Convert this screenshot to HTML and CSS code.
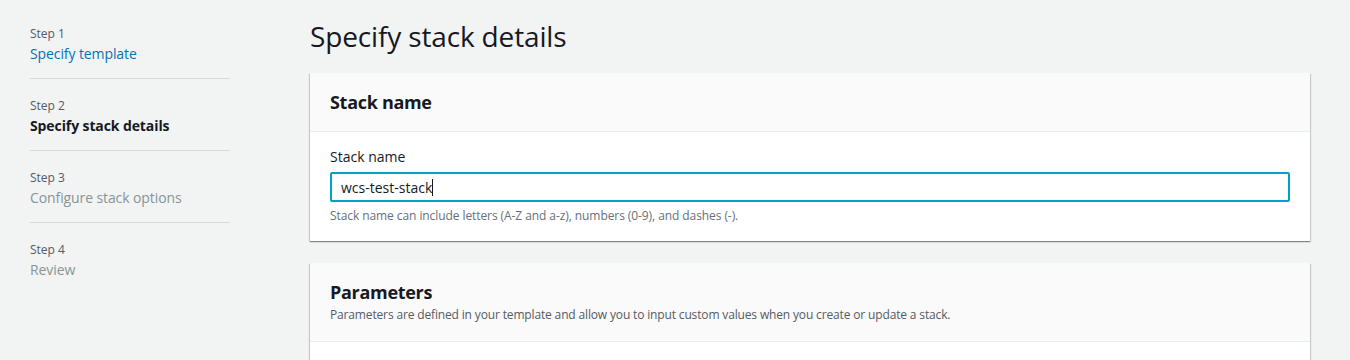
FILE: index.html
```html
<!DOCTYPE html>
<html lang="en">
<head>
<meta charset="utf-8">
<title>Specify stack details</title>
<link rel="stylesheet" href="styles.css">
</head>
<body>
<div class="layout">
  <nav class="steps">
    <div class="step">
      <div class="step-num">Step 1</div>
      <a class="step-title link" href="#">Specify template</a>
    </div>
    <div class="step">
      <div class="step-num">Step 2</div>
      <div class="step-title current">Specify stack details</div>
    </div>
    <div class="step">
      <div class="step-num">Step 3</div>
      <div class="step-title disabled">Configure stack options</div>
    </div>
    <div class="step">
      <div class="step-num">Step 4</div>
      <div class="step-title disabled">Review</div>
    </div>
  </nav>
  <main class="main">
    <h1 class="page-title">Specify stack details</h1>
    <section class="card">
      <header class="card-header">
        <h2 class="card-title">Stack name</h2>
      </header>
      <div class="card-body">
        <label class="field-label">Stack name</label>
        <div class="input"><span class="input-text">wcs-test-stack</span><span class="caret"></span></div>
        <div class="hint">Stack name can include letters (A-Z and a-z), numbers (0-9), and dashes (-).</div>
      </div>
    </section>
    <section class="card">
      <header class="card-header">
        <h2 class="card-title">Parameters</h2>
        <p class="card-desc">Parameters are defined in your template and allow you to input custom values when you create or update a stack.</p>
      </header>
      <div class="card-body tall"></div>
    </section>
  </main>
</div>
</body>
</html>
```

FILE: styles.css
```css
html, body {
  margin: 0;
  padding: 0;
  background: #f2f3f3;
  font-family: "Open Sans", "Noto Sans", sans-serif;
  color: #16191f;
}

.layout {
  display: grid;
  grid-template-columns: 200px 1000px;
  column-gap: 80px;
  padding-left: 30px;
}

.steps {
  padding-top: 8px;
}

.step {
  display: flex;
  flex-direction: column;
  padding: 18px 0 13px;
  border-bottom: 1px solid #d5dbdb;
}

.step + .step {
  padding-top: 19px;
}

.step:last-child {
  border-bottom: none;
}

.step-num {
  font-size: 12px;
  line-height: 16px;
  color: #545b64;
  margin-bottom: 1px;
}

.step-title {
  font-size: 14px;
  line-height: 22px;
  text-decoration: none;
  letter-spacing: -0.1px;
}

.link { color: #0073bb; }
.current { color: #16191f; font-weight: 700; }
.disabled { color: #879596; }

.main {
  padding-top: 18px;
}

.page-title {
  margin: 0 0 19px;
  font-size: 28px;
  line-height: 36px;
  font-weight: 400;
  letter-spacing: -0.15px;
  color: #16191f;
}

.card {
  background: #fff;
  box-shadow: 0 1px 1px 0 rgba(0, 28, 36, 0.3), 1px 1px 1px 0 rgba(0, 28, 36, 0.15), -1px 1px 1px 0 rgba(0, 28, 36, 0.15);
  margin-bottom: 22px;
}

.card-header {
  background: #fafafa;
  border-bottom: 1px solid #eaeded;
  padding: 18px 20px;
}

.card-title {
  margin: 0;
  font-size: 18px;
  line-height: 22px;
  font-weight: 700;
  letter-spacing: -0.3px;
  color: #16191f;
}

.card-desc {
  margin: 4px 0 0;
  font-size: 12px;
  line-height: 16px;
  letter-spacing: -0.15px;
  color: #545b64;
}

.card-body {
  padding: 14px 20px 17px;
}

.card-body.tall {
  height: 60px;
}

.field-label {
  display: block;
  font-size: 14px;
  line-height: 22px;
  color: #16191f;
  margin-bottom: 4px;
}

.input {
  display: flex;
  align-items: center;
  height: 26px;
  border: 2px solid #00a1c9;
  border-radius: 2px;
  padding: 0 9px;
  font-size: 14px;
  color: #16191f;
}

.caret {
  width: 1px;
  height: 17px;
  background: #16191f;
}

.hint {
  margin-top: 6px;
  font-size: 12px;
  line-height: 16px;
  letter-spacing: -0.08px;
  color: #687078;
}
```
